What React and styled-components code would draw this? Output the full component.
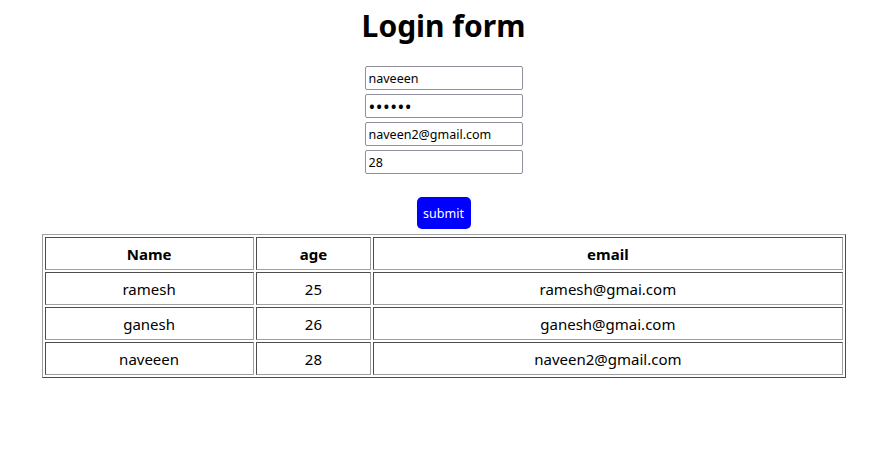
import React from "react";
import styled, { createGlobalStyle } from "styled-components";

const Global = createGlobalStyle`
  html, body { margin: 0; padding: 0; background: #fff; }
  body { font-family: "Noto Sans", "Open Sans", sans-serif; color: #000; }
`;

const Page = styled.div`
  padding-left: 8px;
  display: flex;
  flex-direction: column;
  align-items: center;
`;

const Title = styled.h1`
  margin: 4px 0 18px;
  font-size: 30px;
  font-weight: 700;
  line-height: 44px;
`;

const Form = styled.form`
  display: flex;
  flex-direction: column;
  align-items: center;
`;

const Fields = styled.div`
  display: flex;
  flex-direction: column;
  gap: 4px;
`;

const Input = styled.input`
  box-sizing: border-box;
  width: 158px;
  height: 24px;
  padding: 1px 3px;
  border: 1px solid #8f8f9d;
  border-radius: 2px;
  font-family: "Noto Sans", sans-serif;
  font-size: ${(p) => (p.type === "password" ? "18px" : "12.5px")};
  color: #000;
  background: #fff;
  outline: none;
  letter-spacing: ${(p) => (p.type === "password" ? "0.5px" : "0")};
`;

const SubmitButton = styled.button`
  margin-top: 23px;
  width: 54px;
  height: 32px;
  border: none;
  border-radius: 5px;
  background: #0000ff;
  color: #fff;
  font-family: "Noto Sans", sans-serif;
  font-size: 12.5px;
  padding: 0;
`;

const Table = styled.table`
  margin-top: 5px;
  width: 804px;
  border: 1px outset #a0a0a0;
  border-spacing: 2px;
  font-size: 15px;
`;

const Cell = styled.td`
  border: 1px inset #a0a0a0;
  text-align: center;
  height: 31px;
  padding: 0;
  width: ${(p) => p.$w}px;
`;

const Head = styled(Cell).attrs({ as: "th" })`
  font-weight: 700;
`;

const rows = [
  ["ramesh", "25", "ramesh@gmai.com"],
  ["ganesh", "26", "ganesh@gmai.com"],
  ["naveeen", "28", "naveen2@gmail.com"],
];

const widths = [208, 114, 469];

export default function App() {
  return (
    <>
      <Global />
      <Page>
        <Title>Login form</Title>
        <Form onSubmit={(e) => e.preventDefault()}>
          <Fields>
            <Input type="text" defaultValue="naveeen" />
            <Input type="password" defaultValue="123456" />
            <Input type="email" defaultValue="naveen2@gmail.com" />
            <Input type="number" defaultValue="28" />
          </Fields>
          <SubmitButton type="submit">submit</SubmitButton>
        </Form>
        <Table>
          <thead>
            <tr>
              <Head $w={widths[0]}>Name</Head>
              <Head $w={widths[1]}>age</Head>
              <Head $w={widths[2]}>email</Head>
            </tr>
          </thead>
          <tbody>
            {rows.map((r) => (
              <tr key={r[0]}>
                {r.map((v, i) => (
                  <Cell key={i} $w={widths[i]}>{v}</Cell>
                ))}
              </tr>
            ))}
          </tbody>
        </Table>
      </Page>
    </>
  );
}
